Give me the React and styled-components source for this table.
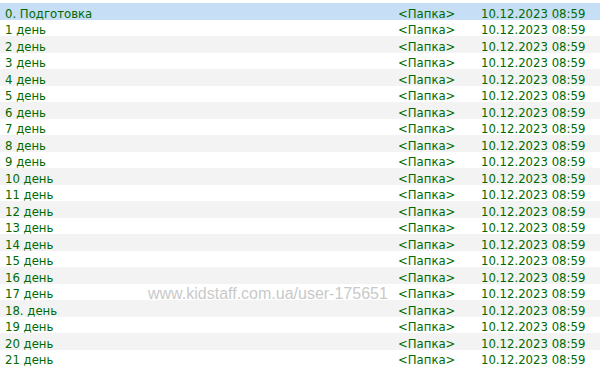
import React from "react";
import styled, { createGlobalStyle } from "styled-components";

const Global = createGlobalStyle`
  html, body { margin: 0; padding: 0; background: #fff; }
  body { width: 600px; height: 371px; overflow: hidden; }
`;

const List = styled.div`
  position: relative;
  padding-top: 3px;
  font-family: "DejaVu Sans", Tahoma, sans-serif;
  font-size: 11.7px;
  color: #006a00;
`;

const Row = styled.div`
  display: grid;
  grid-template-columns: 398px 83px 1fr;
  height: 16.5px;
  align-items: end;
  background: ${(p) => (p.$selected ? "#c6def6" : p.$alt ? "#f3f3f3" : "#fff")};
  line-height: 15px;
  white-space: nowrap;
`;

const Name = styled.span`
  padding-left: 5px;
  transform: translateY(1.5px);
`;

const Cell = styled.span`
  position: relative;
  z-index: 2;
  transform: translateY(1.5px);
`;

const Watermark = styled.div`
  position: absolute;
  left: 148px;
  top: 285px;
  font-family: "Liberation Sans", Arial, sans-serif;
  font-size: 16px;
  color: #c9c9c9;
  z-index: 1;
  white-space: nowrap;
`;

const names = [
  "0. Подготовка",
  ...Array.from({ length: 17 }, (_, i) => `${i + 1} день`),
  "18. день",
  "19 день",
  "20 день",
  "21 день",
];

export default function App() {
  return (
    <>
      <Global />
      <List>
        {names.map((n, i) => (
          <Row key={i} $selected={i === 0} $alt={i % 2 === 0}>
            <Name>{n}</Name>
            <Cell>&lt;Папка&gt;</Cell>
            <Cell>10.12.2023 08:59</Cell>
          </Row>
        ))}
        <Watermark>www.kidstaff.com.ua/user-175651</Watermark>
      </List>
    </>
  );
}
